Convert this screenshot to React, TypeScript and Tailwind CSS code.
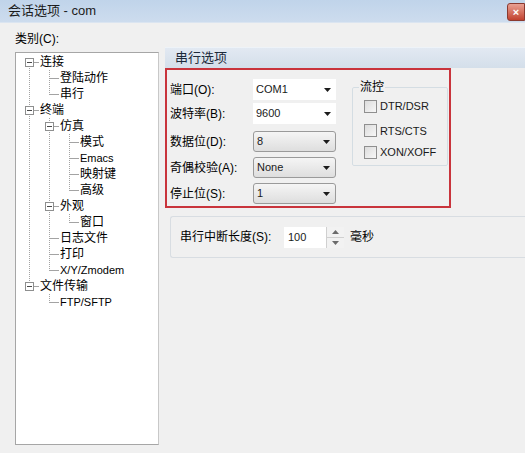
import React from 'react';

const FONT = { fontFamily: '"Liberation Sans", "Noto Sans CJK SC", sans-serif' };

type Node = { label: string; depth: number; last: boolean; parent?: boolean; first?: boolean; chain: boolean[] };

// chain[i] = whether the ancestor at depth i (or the node itself at i == depth) is the last sibling
const TREE: Node[] = [
  { label: '连接', depth: 0, last: false, parent: true, first: true, chain: [false] },
  { label: '登陆动作', depth: 1, last: false, chain: [false, false] },
  { label: '串行', depth: 1, last: true, chain: [false, true] },
  { label: '终端', depth: 0, last: false, parent: true, chain: [false] },
  { label: '仿真', depth: 1, last: false, parent: true, chain: [false, false] },
  { label: '模式', depth: 2, last: false, chain: [false, false, false] },
  { label: 'Emacs', depth: 2, last: false, chain: [false, false, false] },
  { label: '映射键', depth: 2, last: false, chain: [false, false, false] },
  { label: '高级', depth: 2, last: true, chain: [false, false, true] },
  { label: '外观', depth: 1, last: false, parent: true, chain: [false, false] },
  { label: '窗口', depth: 2, last: true, chain: [false, false, true] },
  { label: '日志文件', depth: 1, last: false, chain: [false, false] },
  { label: '打印', depth: 1, last: false, chain: [false, false] },
  { label: 'X/Y/Zmodem', depth: 1, last: true, chain: [false, true] },
  { label: '文件传输', depth: 0, last: true, parent: true, chain: [true] },
  { label: 'FTP/SFTP', depth: 1, last: true, chain: [true, true] },
];

const LINE = '#a3a3a3';

const TreeCell: React.FC<{ own: boolean; node: Node; index: number }> = ({ own, node, index }) => {
  const through = !node.chain[index];
  return (
    <svg width="20" height="16" className="shrink-0" shapeRendering="crispEdges">
      {!own && through && <line x1="10.5" y1="0" x2="10.5" y2="16" stroke={LINE} strokeDasharray="1 1" />}
      {own && (
        <>
          {!node.first && <line x1="10.5" y1="0" x2="10.5" y2="8" stroke={LINE} strokeDasharray="1 1" />}
          {!node.last && <line x1="10.5" y1="8" x2="10.5" y2="16" stroke={LINE} strokeDasharray="1 1" />}
          <line x1="10" y1="8.5" x2="20" y2="8.5" stroke={LINE} />
          {node.parent && (
            <>
              <rect x="6.5" y="4.5" width="8" height="8" fill="#fff" stroke="#8e8f8f" />
              <line x1="8" y1="8.5" x2="13" y2="8.5" stroke="#4a4a4a" />
            </>
          )}
        </>
      )}
    </svg>
  );
};

const Arrow = () => (
  <svg width="7" height="4" viewBox="0 0 7 4" className="shrink-0">
    <polygon points="0,0 7,0 3.5,4" fill="#1c1c1c" />
  </svg>
);

const Combo: React.FC<{ value: string; edit?: boolean }> = ({ value, edit }) => (
  <div
    className={`w-[83px] h-[21px] flex items-center justify-between pl-[3px] pr-[5px] text-[11px] text-[#1a1a1a] ${
      edit
        ? 'bg-white'
        : 'border border-[#9a9a9a] rounded-[3px] bg-gradient-to-b from-[#f5f5f5] to-[#dedede]'
    }`}
  >
    <span>{value}</span>
    <Arrow />
  </div>
);

const Check: React.FC<{ label: string }> = ({ label }) => (
  <div className="flex items-center gap-[3px] ml-[11px] text-[11px] text-[#1a1a1a]">
    <span className="w-[13px] h-[13px] border border-[#8f8f8f] bg-gradient-to-br from-[#dcdcdc] to-[#f7f7f7]" />
    <span>{label}</span>
  </div>
);

export default function App() {
  const rows: { label: string; value: string; edit?: boolean; mt: string }[] = [
    { label: '端口(O):', value: 'COM1', edit: true, mt: 'mt-[9px]' },
    { label: '波特率(B):', value: '9600', edit: true, mt: 'mt-[3px]' },
    { label: '数据位(D):', value: '8', mt: 'mt-[7px]' },
    { label: '奇偶校验(A):', value: 'None', mt: 'mt-[5px]' },
    { label: '停止位(S):', value: '1', mt: 'mt-[5px]' },
  ];

  return (
    <div className="w-[525px] h-[453px] overflow-hidden bg-[#f0f0f0] flex flex-col text-[12px] text-black" style={FONT}>
      {/* title bar */}
      <div className="h-[23px] shrink-0 flex items-center justify-between pl-[8px] bg-gradient-to-b from-[#c0d4ea] to-[#cddcee] border-b border-[#dbe5f1]">
        <span className="text-[13px] text-[#1b1b1b]">会话选项 - com</span>
        <div className="w-[18px] h-[18px] mt-[2px] rounded-l-[3px] border border-[#8a3a30] bg-gradient-to-b from-[#e8a093] to-[#c1402e] flex items-center justify-center">
          <span className="text-white text-[11px] font-bold leading-none">×</span>
        </div>
      </div>

      <div className="flex flex-1">
        {/* category tree */}
        <div className="pl-[15px] flex flex-col">
          <div className="h-[29px] flex items-center pt-[2px]">类别(C):</div>
          <div className="w-[144px] h-[393px] bg-white border border-[#a6a6a6] border-r-[#c8c8c8] pt-[1px] pl-[3px]">
            {TREE.map((node, i) => (
              <div key={i} className="h-[16px] flex items-center">
                {node.chain.map((_, j) => (
                  <TreeCell key={j} own={j === node.depth} node={node} index={j} />
                ))}
                <span
                  className={`pl-[1px] whitespace-nowrap leading-none ${
                    /^[\x00-\x7f]+$/.test(node.label) ? 'text-[11px]' : 'text-[12px]'
                  }`}
                >
                  {node.label}
                </span>
              </div>
            ))}
          </div>
        </div>

        {/* serial options */}
        <div className="ml-[6px] mt-[24px] flex-1 flex flex-col">
          <div className="h-[21px] flex items-center pl-[10px] text-[13px] text-[#1d2a3a] bg-gradient-to-b from-[#e2e9f2] to-[#d4dfea] border-t border-[#eef3f8]">
            串行选项
          </div>

          <div className="w-[286px] h-[140px] border-2 border-[#c9343c] flex items-start">
            <div className="pl-[3px] flex flex-col">
              {rows.map((r) => (
                <div key={r.label} className={`flex items-center ${r.mt}`}>
                  <span className="w-[83px] text-[12px]">{r.label}</span>
                  <Combo value={r.value} edit={r.edit} />
                </div>
              ))}
            </div>

            <fieldset className="ml-[16px] mt-[10px] w-[96px] h-[86px] border border-[#d4dde3] rounded-[2px] flex flex-col">
              <legend className="ml-[6px] px-[1px] text-[12px] leading-[14px]">流控</legend>
              <div className="mt-[4px] flex flex-col">
                <Check label="DTR/DSR" />
                <div className="mt-[8px]">
                  <Check label="RTS/CTS" />
                </div>
                <div className="mt-[5px]">
                  <Check label="XON/XOFF" />
                </div>
              </div>
            </fieldset>
          </div>

          <div className="mt-[8px] ml-[5px] h-[42px] border border-r-0 border-[#d8dde2] rounded-l-[3px] flex items-center pl-[9px]">
            <span className="w-[104px] text-[12px]">串行中断长度(S):</span>
            <div className="w-[60px] h-[21px] bg-white flex items-center justify-between pl-[4px]">
              <span className="text-[11px] text-[#1a1a1a]">100</span>
              <div className="w-[18px] h-full flex flex-col border-l border-[#d0d0d0] bg-[#f2f2f2]">
                <div className="flex-1 flex items-center justify-center border-b border-[#d0d0d0]">
                  <svg width="7" height="4" viewBox="0 0 7 4">
                    <polygon points="0,4 7,4 3.5,0" fill="#6b6b6b" />
                  </svg>
                </div>
                <div className="flex-1 flex items-center justify-center">
                  <svg width="7" height="4" viewBox="0 0 7 4">
                    <polygon points="0,0 7,0 3.5,4" fill="#6b6b6b" />
                  </svg>
                </div>
              </div>
            </div>
            <span className="ml-[6px] text-[12px]">毫秒</span>
          </div>
        </div>
      </div>
    </div>
  );
}
